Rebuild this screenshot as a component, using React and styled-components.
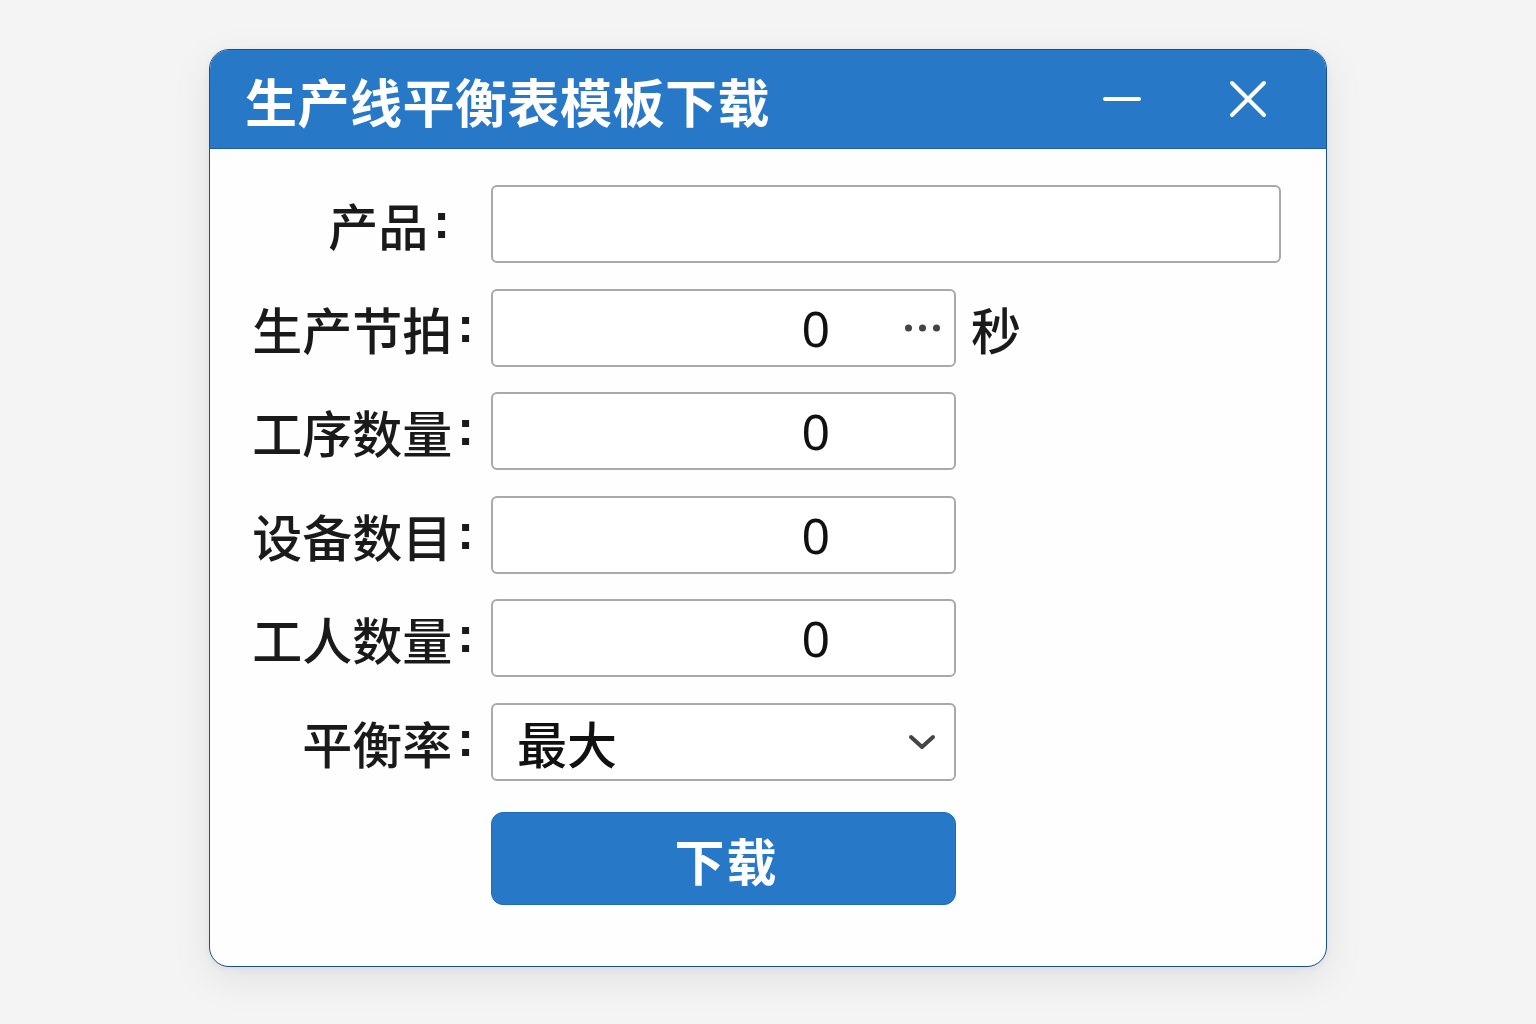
import React from "react";
import styled, { createGlobalStyle } from "styled-components";

const Global = createGlobalStyle`
  html, body {
    margin: 0;
    padding: 0;
    background: #f4f4f4;
  }
  body {
    font-family: "Noto Sans CJK SC", "Noto Sans", sans-serif;
  }
`;

const Page = styled.div`
  width: 1536px;
  height: 1024px;
  display: flex;
  justify-content: flex-start;
  align-items: flex-start;
  padding: 49px 0 0 209px;
  box-sizing: border-box;
`;

const Dialog = styled.div`
  width: 1118px;
  height: 918px;
  box-sizing: border-box;
  background: #fefefe;
  border: 1.5px solid #1b4d93;
  border-radius: 20px;
  overflow: hidden;
  box-shadow: 0 12px 40px rgba(0, 0, 0, 0.08), 0 2px 8px rgba(0, 0, 0, 0.05);
  display: flex;
  flex-direction: column;
`;

const TitleBar = styled.div`
  height: 98px;
  background: #2878c8;
  border-bottom: 1.5px solid #1d5ca8;
  display: flex;
  align-items: center;
  padding: 0 58px 0 35px;
  color: #fff;
`;

const Title = styled.div`
  flex: 1;
  font-size: 52px;
  font-weight: 700;
  letter-spacing: 0.5px;
  line-height: 1;
  margin-top: 4px;
`;

const WinButton = styled.div`
  width: 40px;
  height: 40px;
  display: flex;
  align-items: center;
  justify-content: center;
  margin-left: ${(p) => p.gap || 0}px;
`;

const Form = styled.div`
  display: grid;
  grid-template-columns: 264px 465px 1fr;
  column-gap: 17px;
  row-gap: 25.5px;
  padding: 36px 45px 0 0;
  grid-auto-rows: 78px;
`;

const Label = styled.div`
  display: flex;
  align-items: center;
  justify-content: flex-end;
  font-size: 50px;
  font-weight: 500;
  color: #1a1a1a;
  padding-right: ${(p) => p.shift || 0}px;
  white-space: nowrap;
`;

const Colon = styled.span`
  font-family: "Liberation Sans", sans-serif;
  font-weight: 700;
  margin-left: 5px;
  position: relative;
  top: -3px;
`;

const Box = styled.div`
  box-sizing: border-box;
  border: 2px solid #a9a9a9;
  border-radius: 6px;
  background: #fff;
  grid-column: ${(p) => (p.wide ? "2 / 4" : "2 / 3")};
  display: flex;
  align-items: center;
  position: relative;
`;

const Value = styled.div`
  flex: 1;
  text-align: right;
  padding-right: 124px;
  font-family: "Noto Sans", sans-serif;
  font-size: 50px;
  color: #111;
  line-height: 1;
`;

const Dots = styled.div`
  position: absolute;
  right: 14px;
  top: 50%;
  transform: translateY(-50%);
  display: flex;
  gap: 7px;
`;

const Dot = styled.span`
  width: 7px;
  height: 7px;
  border-radius: 50%;
  background: #444;
`;

const Unit = styled.div`
  display: flex;
  align-items: center;
  font-size: 50px;
  font-weight: 500;
  color: #1a1a1a;
  margin-left: -2px;
`;

const SelectText = styled.div`
  flex: 1;
  padding-left: 24px;
  font-size: 50px;
  font-weight: 500;
  color: #111;
`;

const Chevron = styled.div`
  width: 30px;
  margin-right: 17px;
  display: flex;
  align-items: center;
`;

const DownloadButton = styled.button`
  grid-column: 2 / 3;
  height: 93px;
  margin-top: 6px;
  border: 1px solid #1f6cbd;
  border-radius: 12px;
  background: #2878c8;
  color: #fff;
  font-family: "Noto Sans CJK SC", sans-serif;
  font-size: 50px;
  font-weight: 700;
  letter-spacing: 2px;
  padding-left: 12px;
  cursor: pointer;
`;

const rows = [
  { label: "工序数量" },
  { label: "设备数目" },
  { label: "工人数量" },
];

export default function App() {
  return (
    <>
      <Global />
      <Page>
        <Dialog>
          <TitleBar>
            <Title>生产线平衡表模板下载</Title>
            <WinButton>
              <svg width="40" height="40" viewBox="0 0 40 40">
                <line x1="3" y1="20" x2="37" y2="20" stroke="#fff" strokeWidth="4" strokeLinecap="round" />
              </svg>
            </WinButton>
            <WinButton gap={86}>
              <svg width="40" height="40" viewBox="0 0 40 40">
                <path d="M4 4 L36 36 M36 4 L4 36" stroke="#fff" strokeWidth="4" strokeLinecap="round" />
              </svg>
            </WinButton>
          </TitleBar>
          <Form>
            <Label shift={24}>
              产品<Colon>:</Colon>
            </Label>
            <Box wide />

            <Label>
              生产节拍<Colon>:</Colon>
            </Label>
            <Box>
              <Value>0</Value>
              <Dots>
                <Dot />
                <Dot />
                <Dot />
              </Dots>
            </Box>
            <Unit>秒</Unit>

            {rows.map((r) => (
              <React.Fragment key={r.label}>
                <Label>
                  {r.label}
                  <Colon>:</Colon>
                </Label>
                <Box>
                  <Value>0</Value>
                </Box>
                <div />
              </React.Fragment>
            ))}

            <Label>
              平衡率<Colon>:</Colon>
            </Label>
            <Box>
              <SelectText>最大</SelectText>
              <Chevron>
                <svg width="30" height="20" viewBox="0 0 30 20">
                  <path d="M4 5 L15 15 L26 5" fill="none" stroke="#444" strokeWidth="4" strokeLinecap="round" strokeLinejoin="round" />
                </svg>
              </Chevron>
            </Box>
            <div />

            <div />
            <DownloadButton>下载</DownloadButton>
          </Form>
        </Dialog>
      </Page>
    </>
  );
}
